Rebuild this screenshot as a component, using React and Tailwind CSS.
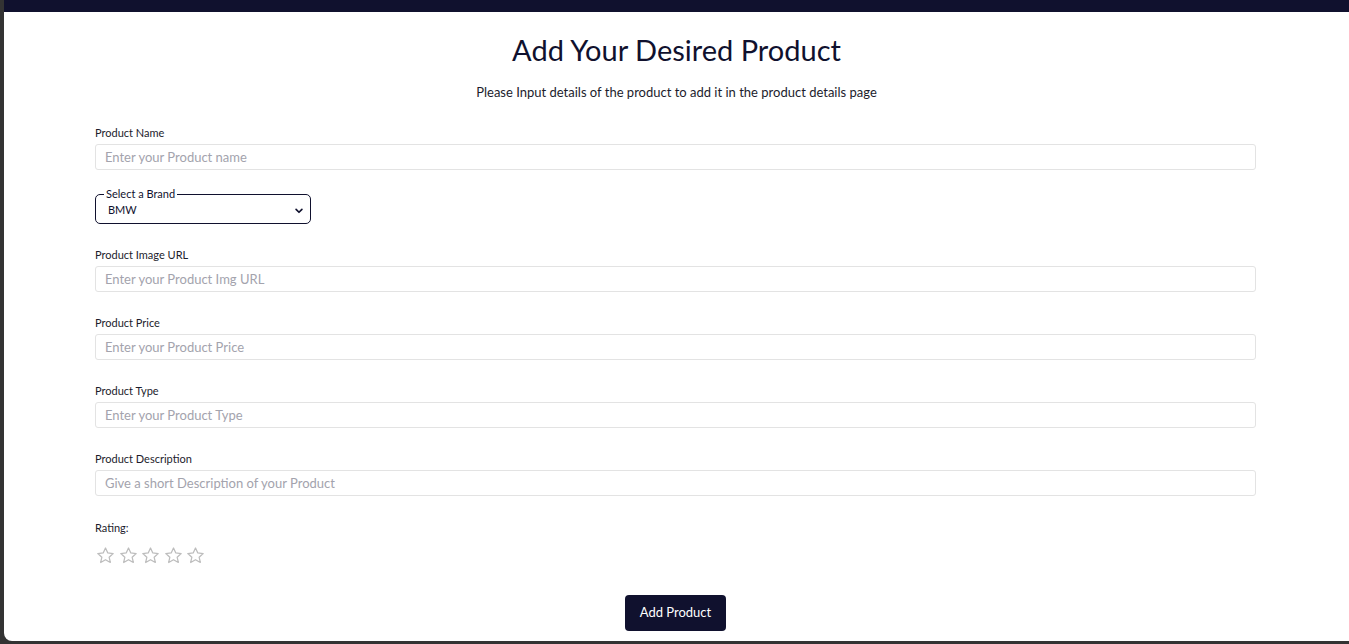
import React from "react";

const fields = [
  { label: "Product Image URL", placeholder: "Enter your Product Img URL" },
  { label: "Product Price", placeholder: "Enter your Product Price" },
  { label: "Product Type", placeholder: "Enter your Product Type" },
  { label: "Product Description", placeholder: "Give a short Description of your Product" },
];

const Field = ({ label, placeholder }) => (
  <div className="flex flex-col gap-[4px]">
    <label className="text-[11px] leading-[14px] text-[#1c1c2c]">{label}</label>
    <input
      type="text"
      placeholder={placeholder}
      className="h-[26px] w-full rounded-[3px] border border-[#e3e3e3] px-[9px] text-[13px] text-[#1c1c2c] outline-none placeholder:text-[#a3a3ad]"
    />
  </div>
);

const Star = () => (
  <svg width="19" height="19" viewBox="0 0 24 24" fill="none" stroke="#bdbdbd" strokeWidth="1.6" strokeLinejoin="round">
    <path d="M12 2.5l2.9 6.3 6.8.7-5.1 4.6 1.5 6.7L12 17.3l-6.1 3.5 1.5-6.7-5.1-4.6 6.8-.7z" />
  </svg>
);

const App = () => {
  return (
    <div
      className="h-[644px] w-full bg-[#333333] pb-[3px] pl-[4px]"
      style={{ fontFamily: "Lato, 'Noto Sans', sans-serif" }}
    >
      <div className="flex h-full flex-col overflow-hidden rounded-bl-[8px] bg-white">
        {/* top bar */}
        <div className="h-[12px] w-full bg-[#10112e]"></div>

        <h1 className="mt-[20px] text-center text-[29px] leading-[36px] text-[#10112e]">
          Add Your Desired Product
        </h1>
        <p className="mt-[15px] text-center text-[13px] leading-[18px] text-[#1c1c2c]">
          Please Input details of the product to add it in the product details page
        </p>

        <form className="ml-[91px] mt-[25px] flex w-[1161px] flex-col">
          <Field label="Product Name" placeholder="Enter your Product name" />

          <fieldset className="relative mt-[17px] w-[216px] rounded-[5px] border border-[#10112e] pb-[4px] pl-[8px] pr-[6px]">
            <legend className="px-[2px] text-[11px] leading-[14px] text-[#10112e]">Select a Brand</legend>
            <select className="block h-[18px] w-full appearance-none pl-[4px] text-[11px] leading-[14px] text-[#10112e] outline-none">
              <option>BMW</option>
              <option>Mercedes</option>
              <option>Toyota</option>
              <option>Ford</option>
            </select>
            <svg
              className="pointer-events-none absolute right-[6px] top-[5px]"
              width="10"
              height="10"
              viewBox="0 0 24 24"
              fill="none"
              stroke="#10112e"
              strokeWidth="4"
              strokeLinecap="round"
              strokeLinejoin="round"
            >
              <path d="M5 8l7 7 7-7" />
            </svg>
          </fieldset>

          <div className="mt-[24px] flex flex-col gap-[24px]">
            {fields.map((f) => (
              <Field key={f.label} label={f.label} placeholder={f.placeholder} />
            ))}
          </div>

          <div className="mt-[25px] flex flex-col">
            <span className="text-[11px] leading-[14px] text-[#1c1c2c]">Rating:</span>
            <div className="mt-[11px] flex gap-[3.5px] pl-[1px]">
              {[0, 1, 2, 3, 4].map((i) => (
                <Star key={i} />
              ))}
            </div>
          </div>

          <div className="mt-[30px] flex justify-center">
            <button
              type="button"
              className="h-[36px] w-[101px] rounded-[4px] bg-[#10112e] text-[13px] text-white"
            >
              Add Product
            </button>
          </div>
        </form>
      </div>
    </div>
  );
};

export default App;
